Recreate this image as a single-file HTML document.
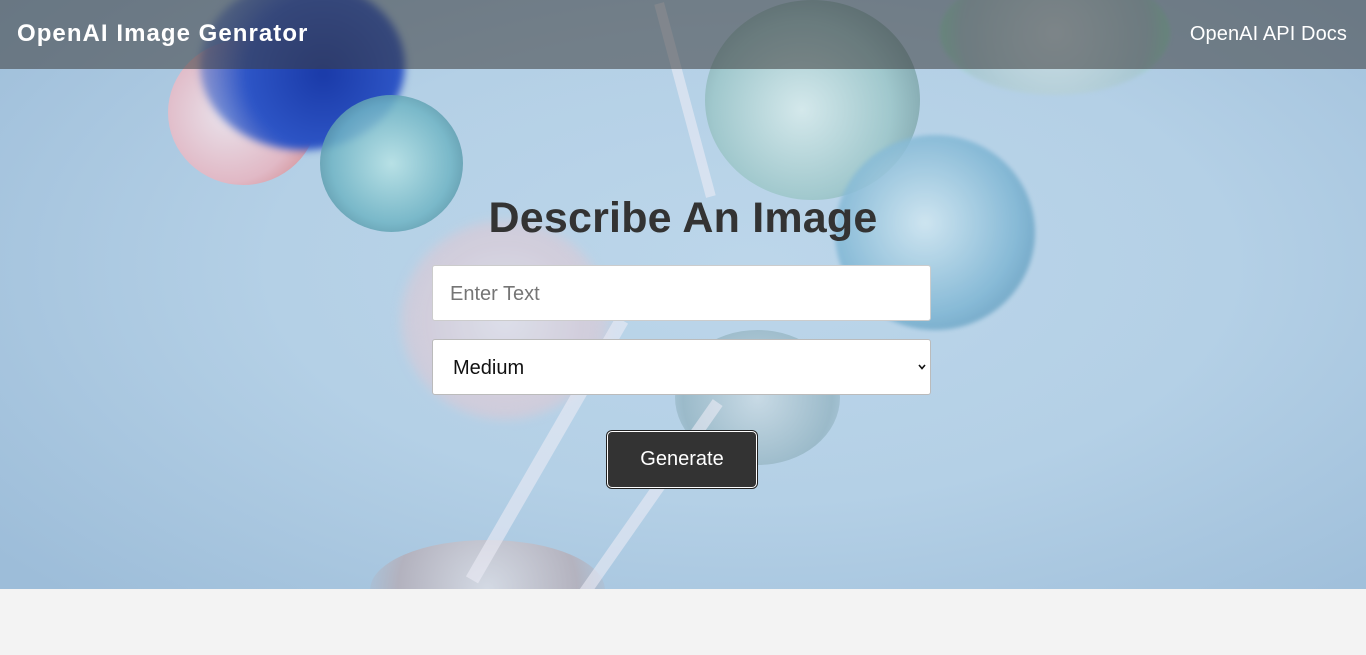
<!DOCTYPE html>
<html><head><style>
html,body{margin:0;padding:0;width:1366px;height:655px;overflow:hidden;background:#f3f3f3;font-family:"Liberation Sans",sans-serif}
.hero{position:absolute;left:0;top:0;width:1366px;height:589px;overflow:hidden;
background:radial-gradient(ellipse 70% 80% at 55% 45%,#bcd6ea 0%,#b4d0e6 50%,#9dbdd9 100%)}
.b{position:absolute;border-radius:50%}
header{position:absolute;left:0;top:0;width:1366px;height:69px;background:rgba(60,60,60,.55);z-index:5}
.logo{position:absolute;left:17px;top:20px;color:#fff;font-weight:bold;font-size:24px;letter-spacing:1.05px}
.docs{position:absolute;right:19px;top:23px;color:#fff;font-size:20px;letter-spacing:0.1px}
h1{position:absolute;left:0;width:1366px;top:194px;margin:0;text-align:center;font-size:43px;color:#333;font-weight:bold;z-index:4;letter-spacing:0.2px}
.in{position:absolute;left:432px;width:499px;height:56px;background:#fff;border:1px solid #ccc;border-radius:3px;z-index:4;box-sizing:border-box}
.btn{position:absolute;left:607px;top:431px;width:150px;height:57px;background:#333;border:1px solid #fff;border-radius:5px;box-sizing:border-box;color:#fff;font-size:20px;text-align:center;line-height:55px;z-index:4;box-shadow:0 0 0 1px #222}
</style></head><body>
<div class="hero">
<div class="b" style="left:168px;top:40px;width:150px;height:145px;background:radial-gradient(circle at 40% 50%,#f4e8ee,#e9b5c0 60%,#c66 100%);opacity:.85"></div>
<div class="b" style="left:200px;top:-20px;width:205px;height:170px;background:radial-gradient(circle at 60% 55%,#1a3aa8,#2d55c6 50%,rgba(60,100,200,.5) 80%,transparent 100%);filter:blur(4px)"></div>
<div class="b" style="left:320px;top:95px;width:143px;height:137px;background:radial-gradient(circle,#b8e3e5,#6fb4c4 60%,#3a6f82 100%);opacity:.85"></div>
<div class="b" style="left:705px;top:0px;width:215px;height:200px;background:radial-gradient(circle at 45% 55%,#d9ecec,#9cc6c8 55%,#5b7f86 100%);opacity:.85"></div>
<div class="b" style="left:835px;top:135px;width:200px;height:195px;background:radial-gradient(circle at 45% 45%,#d2e8f2,#7fb6d4 60%,#4c85a8 100%);filter:blur(2px);opacity:.85"></div>
<div class="b" style="left:940px;top:-30px;width:230px;height:125px;background:radial-gradient(circle,#dde8e6,#a5c5c8 70%,#7fa 100%);opacity:.6;filter:blur(2px)"></div>
<div class="b" style="left:400px;top:220px;width:210px;height:200px;background:radial-gradient(circle,#e6e2ea,#d7cbd8 60%,rgba(200,190,210,0) 100%);filter:blur(5px);opacity:.8"></div>
<div class="b" style="left:675px;top:330px;width:165px;height:135px;background:radial-gradient(circle,#cfdde4,#8fb0bd 70%,transparent 100%);opacity:.7"></div>
<div class="b" style="left:370px;top:540px;width:235px;height:100px;background:radial-gradient(circle,#e6e2e6,#b7a9b0 70%,transparent 100%);opacity:.7"></div>
<div style="position:absolute;left:540px;top:300px;width:14px;height:300px;background:rgba(235,235,245,.6);transform:rotate(30deg)"></div>
<div style="position:absolute;left:640px;top:380px;width:12px;height:250px;background:rgba(235,235,245,.6);transform:rotate(35deg)"></div>
<div style="position:absolute;left:680px;top:0px;width:10px;height:200px;background:rgba(235,235,245,.6);transform:rotate(-15deg)"></div>
</div>
<header><div class="logo">OpenAI Image Genrator</div><div class="docs">OpenAI API Docs</div></header>
<h1>Describe An Image</h1>
<div class="in" style="top:265px"><span style="position:absolute;left:17px;top:17px;font-size:20px;color:#757575">Enter Text</span></div>
<div class="in" style="top:339px;border-color:#bbb"><span style="position:absolute;left:20px;top:17px;font-size:20px;color:#111">Medium</span><svg style="position:absolute;right:4px;top:24px" width="8" height="6" viewBox="0 0 8 6"><path d="M1 1 L4 4.5 L7 1" stroke="#111" stroke-width="1.6" fill="none"/></svg></div>
<div class="btn">Generate</div>
</body></html>
